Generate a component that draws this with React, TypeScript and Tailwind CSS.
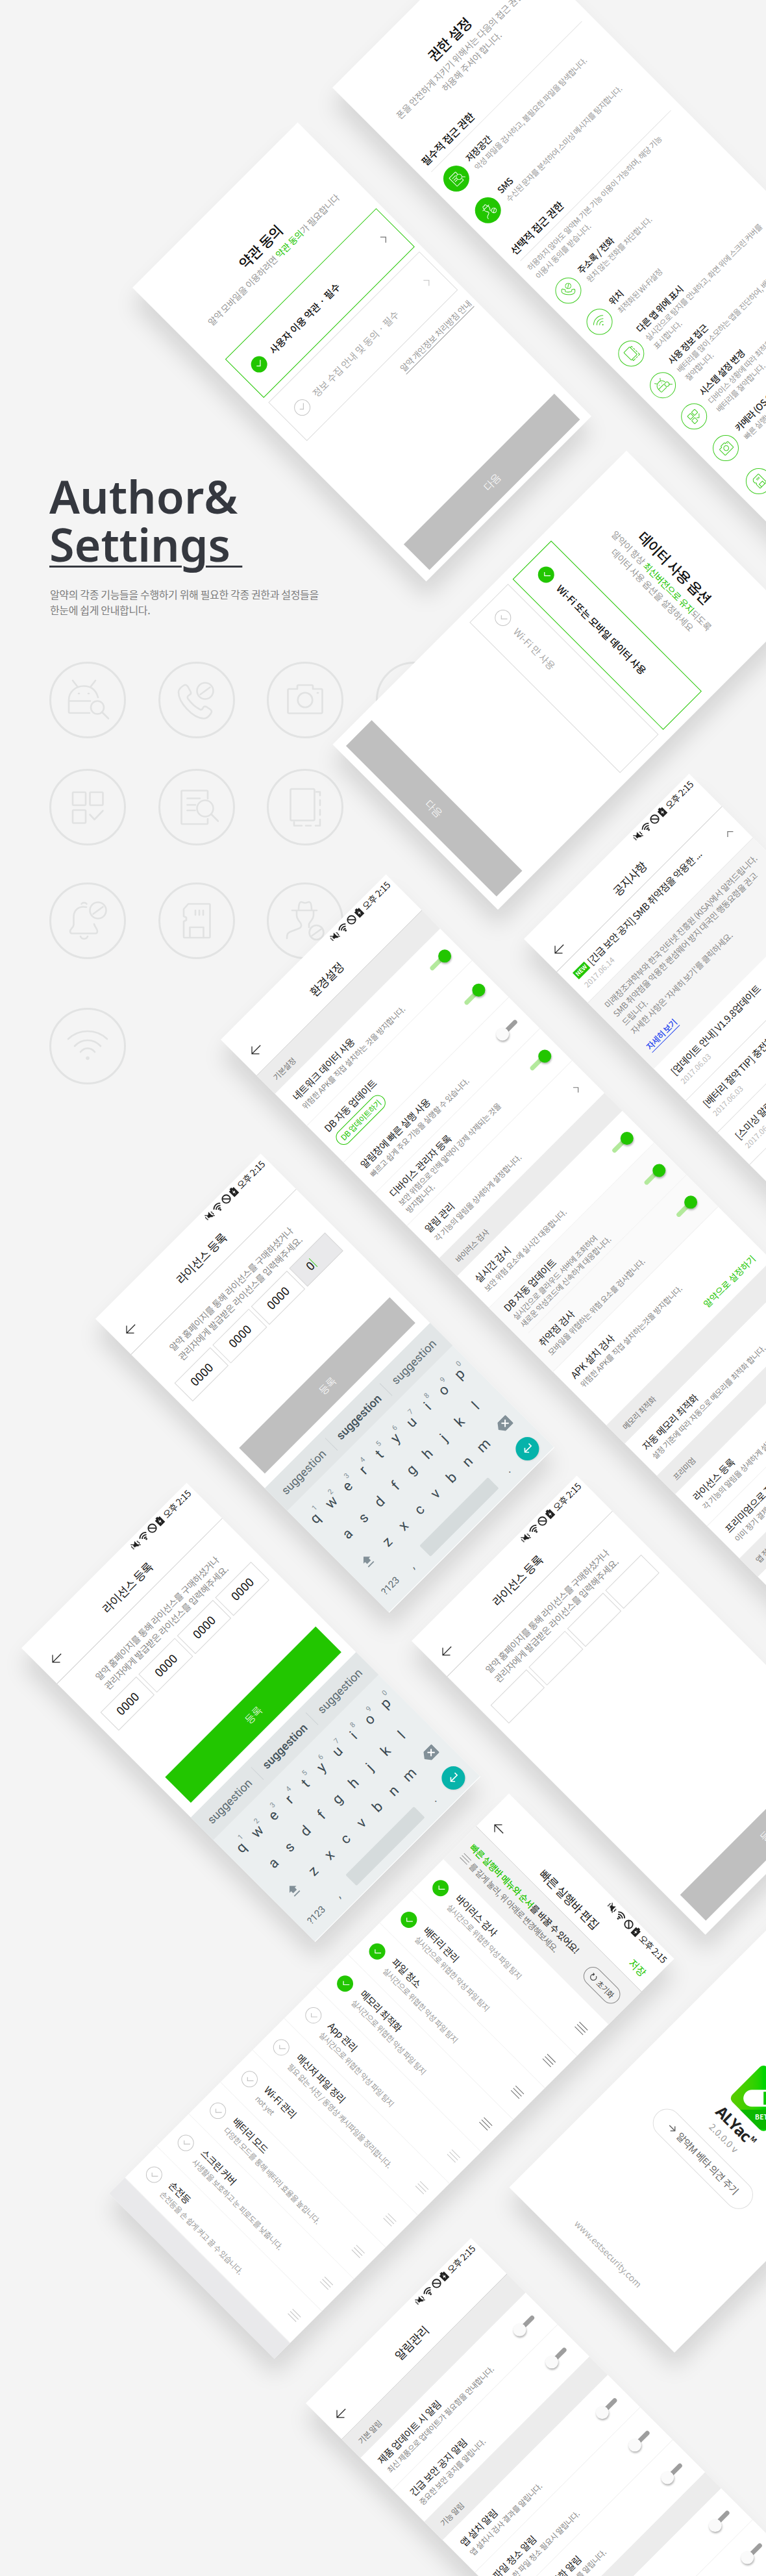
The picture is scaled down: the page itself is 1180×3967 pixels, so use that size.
import React from 'react';

type IconName = 'android' | 'phone' | 'camera' | 'grid' | 'doc' | 'copy' | 'bell' | 'sd' | 'spy' | 'wifi';

const glyphs: Record<IconName, React.ReactNode> = {
  android: (
    <>
      <path d="M3 20h-30a2 2 0 0 1-2-2V0C-29-13-18-21.500-6-21.500S13-15 16-4M-29 1.500H4" />
      <path d="M-23-30l7 9M12-30l-7 9M-14-10h1M1-10h1" />
      <circle cx="15" cy="11.500" r="10" />
      <path d="M22 18.500l10 10" />
    </>
  ),
  phone: (
    <>
      <path d="M-20-22.500c2.500-1.500 5-.5 6.500 2l4 7.500c1 2 .5 4-1.500 5l-2 1.500c-1.500 1-1.500 3-.5 4.500C-8.500 5-3 10.500 5 14.500c1.500.7 3 .5 4-1l1-2c1.200-1.800 3-2 5-1l6 4c2.200 1.500 2.500 4 1 6-2.500 4-6 8-11 8C-7 28-28 3-28-12c0-5 4-8 8-10.500z" />
      <circle cx="13" cy="-14" r="12.500" />
      <path d="M5.500-8.500l15-11" />
    </>
  ),
  camera: (
    <>
      <path d="M-12-17v-4a2 2 0 0 1 2-2h20a2 2 0 0 1 2 2v4h12.500a2 2 0 0 1 2 2V18.500a2 2 0 0 1-2 2h-49a2 2 0 0 1-2-2V-15a2 2 0 0 1 2-2z" />
      <circle cx="0" cy="0" r="11.300" />
      <path d="M19-11h1" />
    </>
  ),
  grid: (
    <>
      <rect x="-23" y="-23" width="20" height="20" rx="1.500" />
      <rect x="3.500" y="-23" width="20" height="20" rx="1.500" />
      <rect x="-23" y="4.500" width="20" height="20" rx="1.500" />
      <path d="M3.500 11.500l7 7.500L23.500 5.500" />
    </>
  ),
  doc: (
    <>
      <path d="M17-13v-11a1.500 1.500 0 0 0-1.500-1.500h-37.500A1.500 1.500 0 0 0-23.500-24v48.500a1.500 1.500 0 0 0 1.500 1.500h37.500a1.500 1.500 0 0 0 1.500-1.500V18" />
      <path d="M-14.500-13.500H5M-14.500-3.500H-2M-14.500 5h12" />
      <circle cx="13" cy="2" r="12.500" />
      <path d="M22.500 11l10.500 10.500" />
    </>
  ),
  copy: (
    <>
      <rect x="-22.500" y="-28" width="37" height="48.500" rx="2" />
      <path d="M17-23.500h6V-18M23-11v8M23 4v8M23 19v9.500h-7M9 28.500H1M-5 28.500h-12V23" />
    </>
  ),
  bell: (
    <>
      <path d="M-2-21c-12-2.500-19.500 5-19.500 15V6c0 5-5.500 6-5.500 10 0 2 1 3.500 3 3.500h36c2 0 3-1.500 3-3.500C15 12 11 10 10 5" />
      <path d="M-11 24c2 5 9 5 11 0M-9.500-26c2-2.500 6-2.500 8 0" />
      <circle cx="16" cy="-16" r="12.500" />
      <path d="M8.500-10.500l15-11" />
    </>
  ),
  sd: (
    <>
      <path d="M-13-26h32a1.500 1.500 0 0 1 1.500 1.500v49A1.500 1.500 0 0 1 19 26h-37.500a1.500 1.500 0 0 1-1.500-1.500V1l4-2v-4l-4-2v-11z" />
      <path d="M-10.500 26V10h21v16M-2-16v7M4-16v7M10-16v7" />
    </>
  ),
  spy: (
    <>
      <path d="M-20-16h38M-10-16c0-9 1-13 4-13 2 0 3 1.500 6 1.500S4-29 6-29c3 0 4 4 4 13" />
      <path d="M-13-15v6C-13-1-7 1-6 6c.500 3-1 5-4 6l-13 5c-4 1.500-5 4-5 10M13-15v6C13-2 8 0 6 5v5" />
      <circle cx="17.500" cy="18" r="11" />
      <path d="M10.500 23l14-10" />
    </>
  ),
  wifi: (
    <>
      <path d="M-30-11C-13-27 13-27 30-11M-20 0c11-12 29-12 40 0M-11 9c6-7.500 16-7.500 22 0" />
      <circle cx="0" cy="18.500" r="1.500" />
    </>
  ),
};

function Glyph({ name, className, stroke }: { name: IconName; className: string; stroke: number }) {
  return (
    <svg viewBox="-34 -34 68 68" className={className} fill="none" stroke="currentColor" strokeWidth={stroke} strokeLinecap="round" strokeLinejoin="round">
      {glyphs[name]}
    </svg>
  );
}

function Badge({ name }: { name?: IconName }) {
  return (
    <div className="flex size-[118px] items-center justify-center rounded-full border-[3px] border-[#e2e3e3] text-[#e1e2e2]">
      {name && <Glyph name={name} className="size-[68px]" stroke={2.6} />}
    </div>
  );
}

const leftShadow = 'shadow-[-18px_18px_34px_rgba(0,0,0,0.13)]';
const rightShadow = 'shadow-[18px_18px_34px_rgba(0,0,0,0.13)]';

function Screen({ at, tilt, children }: { at: string; tilt: 'left' | 'right'; children: React.ReactNode }) {
  const turn = tilt === 'left' ? '-rotate-45 ' + leftShadow : 'rotate-45 ' + rightShadow;
  return <section className={`absolute w-[360px] origin-top-left bg-white ${turn} ${at}`}>{children}</section>;
}

function StatusBar() {
  return (
    <div className="flex h-6 items-center justify-end gap-[2px] pr-[7px] text-[#222]">
      <svg viewBox="0 0 16 16" className="size-[16px]" fill="currentColor">
        <path d="M4 6h2.500L10.500 2.500v11L6.500 10H4z" />
        <path d="M2.500 2.500l11 11" fill="none" stroke="currentColor" strokeWidth="1.300" />
        <path d="M1.800 5l-1 1.500 1 1.500-1 1.500 1 1.500M13 5l1.200 1.500L13 8l1.200 1.500L13 11" fill="none" stroke="currentColor" strokeWidth="1.100" />
      </svg>
      <svg viewBox="0 0 16 16" className="size-[16px]" fill="none" stroke="currentColor" strokeWidth="1.800">
        <path d="M1 6C5 1.800 11 1.800 15 6M3.300 8.700c2.700-2.700 6.700-2.700 9.400 0M5.700 11.200c1.400-1.400 3.200-1.400 4.600 0" />
        <circle cx="8" cy="13.300" r=".6" fill="currentColor" />
      </svg>
      <svg viewBox="0 0 16 16" className="size-[16px]" fill="none" stroke="currentColor" strokeWidth="1.800">
        <circle cx="8" cy="8" r="6.200" />
        <path d="M3.600 3.600l8.800 8.800" />
      </svg>
      <svg viewBox="0 0 12 16" className="h-[16px] w-[12px]">
        <path d="M1 3h3V1h4v2h3v12H1z" fill="currentColor" />
        <path d="M7 4.500L3.500 9.500H6L5 13l3.500-5H6z" fill="#fff" />
      </svg>
      <span className="ml-[2px] text-[14px] leading-none tracking-tight">오후 2:15</span>
    </div>
  );
}

function Header({ title, size, action }: { title: string; size: string; action?: string }) {
  return (
    <header className={`border-b border-[#cfcfcf] ${size}`}>
      <StatusBar />
      <div className="grid h-[50px] grid-cols-[60px_1fr_60px] items-center">
        <svg viewBox="0 0 22 22" className="ml-[17px] size-[21px]" fill="none" stroke="#222" strokeWidth="1.300">
          <path d="M21 11H1.500M10 2.500L1.500 11l8.500 8.500" />
        </svg>
        <h2 className="pl-[2px] text-center text-[18px] tracking-[-0.02em] text-[#222]">{title}</h2>
        <span className="text-center text-[16px] text-[#22c600]">{action}</span>
      </div>
    </header>
  );
}

function Toggle({ on }: { on: boolean }) {
  return (
    <span className="relative flex h-5 w-[42px] shrink-0 items-center px-[2px]">
      <span className={`h-[7px] w-full rounded-full ${on ? 'bg-[#b3e99c]' : 'bg-[#9e9e9e]'}`} />
      <span className={`absolute top-0 size-5 rounded-full shadow-[-1px_2px_3px_rgba(0,0,0,0.3)] ${on ? 'right-0 bg-[#22c600]' : 'left-0 bg-[#fafafa]'}`} />
    </span>
  );
}

function Chevron({ className }: { className: string }) {
  return (
    <svg viewBox="0 0 10 14" className={className} fill="none" stroke="currentColor" strokeWidth="1.300">
      <path d="M2 1l6 6-6 6" />
    </svg>
  );
}

function Setting({ title, lines, size, toggle, extra, chevron }: {
  title: string; lines: string[]; size: string; toggle?: boolean; extra?: React.ReactNode; chevron?: boolean;
}) {
  return (
    <div className={`flex items-center justify-between pr-[15px] pl-4 ${size}`}>
      <div>
        <h3 className="text-[15px] leading-[22px] tracking-[-0.02em] text-[#222]">{title}</h3>
        {lines.map((l) => (
          <p key={l} className={`whitespace-nowrap text-[12px] tracking-[-0.03em] text-[#868686] ${lines.length > 1 ? 'leading-4' : 'leading-[18px]'}`}>{l}</p>
        ))}
        {extra}
      </div>
      {toggle !== undefined && <Toggle on={toggle} />}
      {chevron && <Chevron className="mr-1.5 h-[13px] w-[9px] text-[#777]" />}
    </div>
  );
}

function Band({ children, size }: { children: React.ReactNode; size: string }) {
  return <div className={`flex items-center bg-[#ececec] px-4 pt-1 text-[12px] tracking-[-0.03em] text-[#777] ${size}`}>{children}</div>;
}

function Check({ on }: { on: boolean }) {
  return (
    <span className={`flex size-[25px] shrink-0 items-center justify-center rounded-full ${on ? 'bg-[#22c600] text-white' : 'border border-[#c4c4c4] text-[#c4c4c4]'}`}>
      <svg viewBox="0 0 14 14" className="size-[14px]" fill="none" stroke="currentColor" strokeWidth="1.200">
        <path d="M2 6.500L6 10.500 12.500 4" />
      </svg>
    </span>
  );
}

function Choice({ on, children, chevron }: { on: boolean; children: React.ReactNode; chevron?: boolean }) {
  return (
    <div className={`flex h-[84px] items-center border pr-[18px] pl-[18px] text-[15px] ${on ? 'border-[#22c600] font-medium text-[#111]' : 'border-[#dcdcdc] text-[#aaa]'}`}>
      <Check on={on} />
      <span className="ml-[14px] flex-1">{children}</span>
      {chevron && <Chevron className={`h-[14px] w-[10px] ${on ? 'text-[#777]' : 'text-[#ccc]'}`} />}
    </div>
  );
}

function Permission({ icon, title, lines, filled, size = 'h-[68.700px]' }: {
  icon: IconName; title: string; lines: string[]; filled?: boolean; size?: string;
}) {
  return (
    <div className={`flex items-center pl-4 ${size}`}>
      <span className={`flex size-10 shrink-0 items-center justify-center rounded-full ${filled ? 'bg-[#22c600] text-white' : 'border-[1.500px] border-[#3ccc1e] text-[#3ccc1e]'}`}>
        <Glyph name={icon} className="size-[23px]" stroke={3} />
      </span>
      <div className="ml-3 whitespace-nowrap tracking-[-0.03em]">
        <h4 className="text-[14px] leading-5 font-medium text-[#222]">{title}</h4>
        {lines.map((l) => (
          <p key={l} className="text-[12px] leading-[18px] text-[#999]">{l}</p>
        ))}
      </div>
    </div>
  );
}

function LicenseIntro({ codes, active }: { codes: string[]; active?: number }) {
  return (
    <>
      <Header title="라이선스 등록" size="h-[78px]" />
      <div className="h-[78px] pt-[27px] text-center text-[14px] leading-5 tracking-[-0.025em] text-[#888]">
        알약 홈페이지를 통해 라이선스를 구매하셨거나
        <br />
        관리자에게 발급받은 라이선스를 입력해주세요.
      </div>
      <div className="grid grid-cols-4 gap-[5px] px-4">
        {codes.map((c, i) => (
          <div key={i} className={`flex h-10 items-center justify-center border border-[#d8d8d8] text-[18px] text-[#111] [font-family:Roboto,sans-serif] ${i === active ? 'bg-[#e9e9eb] pr-6' : ''}`}>
            {c}
            {i === active && <i className="ml-px h-[18px] w-[1.500px] bg-[#22c600]" />}
          </div>
        ))}
      </div>
    </>
  );
}

function ShiftIcon() {
  return (
    <svg viewBox="0 0 20 20" className="size-[20px]" fill="#829098">
      <path d="M10 1L2.500 8.500H6V13h8V8.500h3.500zM4 16.500h12v1.800H4z" />
    </svg>
  );
}

function Key({ k, hint }: { k: string; hint?: string }) {
  return (
    <span className="relative w-[34.900px] text-center text-[22px] text-[#3b4a52]">
      {k}
      {hint && <span className="absolute top-0 right-[4px] text-[11px] leading-[10px] text-[#829098]">{hint}</span>}
    </span>
  );
}

function Keyboard() {
  return (
    <div className="mt-4 h-[271px] border-b border-white bg-[#ebeff0] [font-family:Roboto,sans-serif]">
      <div className="flex h-[49px] items-center bg-[#e2e6e7] text-[18px] text-[#5b6a71]">
        <span className="w-[120px] text-center">suggestion</span>
        <span className="w-[120px] border-x border-[#cdd3d5] text-center font-medium text-[#43525a]">suggestion</span>
        <span className="w-[120px] text-center">suggestion</span>
      </div>
      <div className="pt-[12px]">
        <div className="flex h-[52px] items-center pl-[5px]">
          {'qwertyuiop'.split('').map((k, i) => <Key key={k} k={k} hint={String((i + 1) % 10)} />)}
        </div>
        <div className="flex h-[52px] items-center pl-[23px]">
          {'asdfghjkl'.split('').map((k) => <Key key={k} k={k} />)}
        </div>
        <div className="flex h-[52px] items-center pl-[23px]">
          <div className="w-[35px]"><ShiftIcon /></div>
          {'zxcvbnm'.split('').map((k) => <Key key={k} k={k} />)}
          <svg viewBox="0 0 24 18" className="ml-4 h-[18px] w-[24px]">
            <path d="M7 0h15.500a1.500 1.500 0 0 1 1.500 1.500v15a1.500 1.500 0 0 1-1.500 1.500H7L0 9z" fill="#829098" />
            <path d="M10.500 5l8 8M18.500 5l-8 8" stroke="#fff" strokeWidth="2" />
          </svg>
        </div>
        <div className="flex h-[52px] items-center text-[#5b6a71]">
          <span className="w-[61px] text-center text-[15px]">?123</span>
          <span className="w-[29px] text-center text-[18px]">,</span>
          <span className="ml-[16px] h-[24px] w-[149px] rounded-[2px] bg-[#d5dbdc]" />
          <span className="ml-[15px] w-[29px] text-center text-[18px]">.</span>
          <span className="ml-[12px] flex size-9 items-center justify-center rounded-full bg-[#06b3aa] shadow">
            <svg viewBox="0 0 20 20" className="size-[19px]" fill="none" stroke="#fff" strokeWidth="1.800">
              <path d="M17 5v5.500H3M7.500 5.500L2.800 10.500l4.700 5" />
            </svg>
          </span>
        </div>
      </div>
    </div>
  );
}

function BurgerIcon({ className }: { className: string }) {
  return (
    <svg viewBox="0 0 18 12" className={className} stroke="currentColor" strokeWidth="1.200">
      <path d="M0 1h18M0 6h18M0 11h18" />
    </svg>
  );
}

const scan = '실시간으로 위협한 악성 파일 탐지';
const quickItems: [string, string, boolean][] = [
  ['바이러스 검사', scan, true],
  ['배터리 관리', scan, true],
  ['파일 청소', scan, true],
  ['메모리 최적화', scan, true],
  ['App 관리', scan, false],
  ['메신저 파일 정리', '필요 없는 사진 / 동영상 캐시파일을 정리합니다.', false],
  ['Wi-Fi 관리', 'not yet', false],
  ['배터리 모드', '다양한 모드를 통해 배터리 효율을 높입니다.', false],
  ['스크린 커버', '사생활을 보호하고 눈 피로도를 낮춥니다.', false],
  ['손전등', '손전등을 손 쉽게 켜고 끌 수 있습니다.', false],
];

function Notice({ title, date }: { title: string; date: string }) {
  return (
    <div className="flex h-[69.700px] flex-col justify-center border-b border-[#e0e0e0] px-4">
      <h3 className="text-[15px] leading-[21px] tracking-[-0.03em] text-[#222]">{title}</h3>
      <p className="text-[12px] leading-[19px] text-[#bbb]">{date}</p>
    </div>
  );
}

const line = 'border-b border-[#f1f1f1]';

export default function App() {
  return (
    <main className="relative h-[3967px] w-[1180px] overflow-hidden bg-[#f4f4f4] [font-family:'Noto_Sans_CJK_KR','Noto_Sans',sans-serif]">
      <div className="pt-[727px] pl-[76px]">
        <h1 className="text-[70px] leading-[74px] font-semibold text-[#35383f] [font-family:'Noto_Sans',sans-serif]">
          Author&amp;
          <br />
          <span className="underline decoration-[3px] underline-offset-[6px]">Settings&nbsp;</span>
        </h1>
        <p className="mt-[28px] ml-px text-[16px] leading-6 tracking-[-0.022em] text-[#7c7c7c]">
          알약의 각종 기능들을 수행하기 위해 필요한 각종 권한과 설정들을
          <br />
          한눈에 쉽게 안내합니다.
        </p>
        <div className="mt-[68px] flex gap-[49.500px]">
          <Badge name="android" /><Badge name="phone" /><Badge name="camera" /><Badge />
        </div>
        <div className="mt-[47px] flex gap-[49.500px]">
          <Badge name="grid" /><Badge name="doc" /><Badge name="copy" />
        </div>
        <div className="mt-[57px] flex gap-[49.500px]">
          <Badge name="bell" /><Badge name="sd" /><Badge name="spy" />
        </div>
        <div className="mt-[75px] flex">
          <Badge name="wifi" />
        </div>
      </div>

      <Screen tilt="left" at="left-[204px] top-[443px] h-[640px]">
        <div className="pt-[79px] text-center">
          <h2 className="pl-2 text-[22px] leading-[30px] font-medium tracking-[-0.02em] text-[#111]">약관 동의</h2>
          <p className="mt-1 pl-2 text-[14px] leading-5 tracking-[-0.02em] text-[#999]">
            알약 모바일을 이용하려면 <span className="text-[#22c600]">약관 동의</span>가 필요합니다
          </p>
        </div>
        <div className="mt-[46px] mr-2 ml-[23px] flex flex-col gap-[10px]">
          <Choice on chevron>사용자 이용 약관 · 필수</Choice>
          <Choice on={false} chevron>정보 수집 안내 및 동의 · 필수</Choice>
        </div>
        <div className="mt-3 mr-2 text-right">
          <span className="inline-block border-b border-[#999] text-[13px] leading-[18px] tracking-[-0.02em] text-[#999]">알약 개인정보 처리방침 안내</span>
        </div>
        <div className="mx-4 mt-[182px] flex h-14 items-center justify-center bg-[#bfbfbf] text-[16px] font-light text-white">다음</div>
      </Screen>

      <Screen tilt="left" at="left-[512px] top-[135px] h-[1150px]">
        <div className="pt-[59px] text-center">
          <h2 className="text-[22px] leading-[30px] font-medium tracking-[-0.02em] text-[#111]">권한 설정</h2>
          <p className="mt-1 text-[14px] leading-5 tracking-[-0.02em] text-[#999]">
            폰을 안전하게 지키기 위해서는 다음의 접근 권한을
            <br />
            허용해 주셔야 합니다.
          </p>
        </div>
        <h3 className="mx-4 mt-[36px] border-b border-[#e5e5e5] pb-[6px] text-[16px] leading-6 font-medium tracking-[-0.02em] text-[#111]">필수적 접근 권한</h3>
        <Permission filled icon="doc" title="저장공간" lines={['악성 파일을 검사하고, 불필요한 파일을 탐색합니다.']} />
        <Permission filled icon="spy" title="SMS" lines={['수신된 문자를 분석하여 스미싱 메시지를 탐지합니다.']} />
        <h3 className="mx-4 mt-[26px] border-b border-[#e5e5e5] pb-[6px] text-[16px] leading-6 font-medium tracking-[-0.02em] text-[#111]">선택적 접근 권한</h3>
        <p className="mx-4 mt-2 mb-[5px] text-[12px] leading-[18px] tracking-[-0.03em] whitespace-nowrap text-[#999]">
          허용하지 않아도 알약M 기본 기능 이용이 가능하며, 해당 기능
          <br />
          이용시 동의를 받습니다.
        </p>
        <Permission icon="phone" title="주소록 / 전화" lines={['원치 않는 전화를 차단합니다.']} />
        <Permission icon="wifi" title="위치" lines={['최적화된 Wi-Fi설정']} />
        <Permission icon="copy" title="다른 앱 위에 표시" lines={['실시간으로 탐지를 안내하고, 화면 위에 스크린 커버를', '표시합니다.']} />
        <Permission icon="android" title="사용 정보 접근" lines={['배터리를 많이 소모하는 앱을 진단하여, 배터리를', '절약합니다.']} />
        <Permission icon="grid" title="시스템 설정 변경" lines={['디바이스 상황에 따라 최적화된 설정으로', '배터리를 절약합니다.']} />
        <Permission icon="camera" title="카메라 (OS 6.0 이상)" lines={['빠른 실행바의 손전등을 사용합니다.']} />
        <Permission icon="sd" title="저장소" lines={['파일을 안전하게 관리합니다.']} size="h-[75px]" />
      </Screen>

      <Screen tilt="right" at="left-[965px] top-[694px] h-[640px]">
        <div className="pt-[59px] text-center">
          <h2 className="text-[22px] leading-[30px] font-medium tracking-[-0.02em] text-[#111]">데이터 사용 옵션</h2>
          <p className="mt-1 text-[14px] leading-5 tracking-[-0.02em] text-[#999]">
            알약이 항상 <span className="text-[#22c600]">최신버전으로 유지</span>되도록
            <br />
            데이터 사용 옵션을 설정하세요
          </p>
        </div>
        <div className="mx-4 mt-[47px] flex flex-col gap-[10px]">
          <Choice on>Wi-Fi 또는 모바일 데이터 사용</Choice>
          <Choice on={false}>Wi-Fi 만 사용</Choice>
        </div>
        <div className="mx-4 mt-[213px] flex h-14 items-center justify-center bg-[#bfbfbf] text-[16px] font-light text-white">다음</div>
      </Screen>

      <Screen tilt="left" at="left-[807px] top-[1446px] h-[640px]">
        <Header title="공지사항" size="h-[72px]" />
        <div className="flex h-[68px] justify-between border-b border-[#e6e6e6] px-4 pt-[14px]">
          <div>
            <h3 className="flex items-center gap-1 text-[15px] leading-[21px] tracking-[-0.03em] text-[#222]">
              <span className="flex h-[14px] w-[25px] items-center justify-center bg-[#22c600] text-[9px] font-bold tracking-normal text-white">NEW</span>
              [긴급 보안 공지] SMB 취약점을 악용한 ...
            </h3>
            <p className="text-[12px] leading-[21px] text-[#bbb]">2017.06.14</p>
          </div>
          <Chevron className="mt-[15px] h-[14px] w-[10px] -rotate-90 text-[#777]" />
        </div>
        <div className="h-[143px] bg-[#f5f5f5] px-4 pt-[13px] text-[13px] leading-[19px] tracking-[-0.035em] whitespace-nowrap text-[#888]">
          미래창조과학부와 한국 인터넷 진흥원 (KISA)에서 알려드립니다.
          <br />
          SMB 취약점을 악용한 랜섬웨어 방지 대국민 행동요령을 권고
          <br />
          드립니다.
          <br />
          자세한 사항은 ‘자세히 보기’를 클릭하세요.
          <div className="mt-[15px]">
            <span className="inline-block border-b border-[#2547f0] font-medium text-[#2547f0]">자세히 보기</span>
          </div>
        </div>
        <Notice title="[업데이트 안내] V1.9.8업데이트" date="2017.06.03" />
        <Notice title="[배터리 절약 TIP] 충전하는 방법 안내" date="2017.06.03" />
        <Notice title="[스미싱 알림] 스미싱 주의 안내" date="2017.06.03" />
      </Screen>

      <Screen tilt="left" at="left-[340px] top-[1601px] h-[1400px]">
        <Header title="환경설정" size="h-[79px]" />
        <Band size="h-[39px]">기본설정</Band>
        <Setting size={`h-[70px] ${line}`} title="네트워크 데이터 사용" lines={['위험한 APK를 직접 설치하는 것을 방지합니다.']} toggle />
        <Setting size={`h-[79.500px] ${line}`} title="DB 자동 업데이트" lines={[]} toggle
          extra={<span className="mt-1 flex h-6 w-[98px] items-center justify-center rounded-full border border-[#22c600] text-[12px] tracking-[-0.03em] text-[#22c600]">DB 업데이트하기</span>} />
        <Setting size={`h-[68.500px] ${line}`} title="알림창에 빠른 실행 사용" lines={['빠르고 쉽게 주요 기능을 실행할 수 있습니다.']} toggle={false} />
        <Setting size={`h-[70px] ${line}`} title="디바이스 관리자 등록" lines={['보안 위험으로 인해 알약이 강제 삭제되는 것을', '방지합니다.']} toggle />
        <Setting size="h-[70px]" title="알림 관리" lines={['각 기능의 알림을 상세하게 설정합니다.']} chevron />
        <Band size="h-[39px]">바이러스 검사</Band>
        <Setting size={`h-[70px] ${line}`} title="실시간 감시" lines={['보안 위험 요소에 실시간 대응합니다.']} toggle />
        <div className="bg-[#fafafa]">
          <Setting size="h-[69px]" title="DB 자동 업데이트" lines={['실시간으로 클라우드 서버에 조회하여', '새로운 악성코드에 신속하게 대응합니다.']} toggle />
          <div className="ml-4 h-px bg-[#f1f1f1]" />
          <Setting size={`h-[69px] ${line}`} title="취약점 검사" lines={['모바일을 위협하는 위험 요소를 검사합니다.']} toggle />
        </div>
        <div className="h-[116px]">
          <Setting size="h-[70px]" title="APK 설치 검사" lines={['위험한 APK를 직접 설치하는것을 방지합니다.']} />
          <p className="mt-3 pr-4 text-right text-[14px] leading-[22px] text-[#22c600]">알약으로 설정하기</p>
        </div>
        <Band size="h-[40px]">메모리 최적화</Band>
        <Setting size="h-[70px]" title="자동 메모리 최적화" lines={['설정 기준에 따라 자동으로 메모리를 최적화 합니다.']} toggle />
        <Band size="h-[40px]">프리미엄</Band>
        <Setting size={`h-[70px] ${line}`} title="라이선스 등록" lines={['각 기능의 알림을 상세하게 설정합니다.']} />
        <Setting size="h-[70px]" title="프리미엄으로 전환" lines={['이미 정기 결제를 사용하고 있습니다.']} />
        <Band size="h-[40px]">앱 정보</Band>
      </Screen>

      <Screen tilt="left" at="left-[146.500px] top-[2031px] h-[640px]">
        <LicenseIntro codes={['0000', '0000', '0000', '0']} active={3} />
        <div className="mx-4 mt-[101px] flex h-14 items-center justify-center bg-[#bfbfbf] text-[16px] font-light text-white">등록</div>
        <Keyboard />
      </Screen>

      <Screen tilt="left" at="left-[33px] top-[2538px] h-[640px]">
        <LicenseIntro codes={['0000', '0000', '0000', '0000']} />
        <div className="mx-4 mt-[101px] flex h-14 items-center justify-center bg-[#22c600] text-[16px] font-light text-white">등록</div>
        <Keyboard />
      </Screen>

      <Screen tilt="left" at="left-[634px] top-[2526.500px] h-[640px]">
        <LicenseIntro codes={['', '', '', '']} />
        <div className="mx-4 mt-[373px] flex h-14 items-center justify-center bg-[#bfbfbf] text-[16px] font-light text-white">등록</div>
      </Screen>

      <Screen tilt="right" at="left-[784px] top-[2762px] h-[871px]">
        <Header title="빠른 실행바 편집" size="h-[72px]" action="저장" />
        <div className="flex h-[71px] items-center justify-between bg-[#f2f2f2] px-4">
          <div className="tracking-[-0.03em]">
            <p className="text-[14px] leading-[22px] font-medium text-[#333]">
              <span className="text-[#22c600]">빠른 실행바 메뉴와 순서</span>를 바꿀 수 있어요!
            </p>
            <p className="flex items-center gap-1 text-[13px] leading-[22px] tracking-[-0.05em] text-[#777]">
              <BurgerIcon className="h-[11px] w-4 text-[#999]" />를 길게 눌러, 위 아래로 변경해보세요.
            </p>
          </div>
          <span className="flex h-[29px] w-[68px] items-center justify-center gap-1 rounded-full border border-[#888] text-[12px] tracking-[-0.03em] text-[#444]">
            <svg viewBox="0 0 12 12" className="size-3" fill="none" stroke="currentColor" strokeWidth="1.200">
              <path d="M8 1.800A4.600 4.600 0 1 1 3.500 2.200M1.300 1.500l2.700.5-.4 2.700" />
            </svg>
            초기화
          </span>
        </div>
        {quickItems.map(([title, desc, on]) => (
          <div key={title} className="flex h-[69.400px] items-center border-b border-[#f3f3f3] px-4 tracking-[-0.03em]">
            <Check on={on} />
            <div className="ml-[15px] flex-1 whitespace-nowrap">
              <h3 className="text-[15px] leading-[22px] text-[#222]">{title}</h3>
              <p className="text-[12px] leading-[18px] text-[#999]">{desc}</p>
            </div>
            <BurgerIcon className={`h-[12px] w-[19px] ${on ? 'text-[#777]' : 'text-[#ccc]'}`} />
          </div>
        ))}
        <div className="h-[34px] bg-[#e9e9eb]" />
      </Screen>

      <Screen tilt="right" at="left-[1237px] top-[2916px] h-[640px]">
        <div className="flex flex-col items-center pt-[228px]">
          <div className="relative size-[76px] overflow-hidden rounded-[8px] bg-gradient-to-tr from-[#5ccb00] via-[#00d400] to-[#00dc10]">
            <div className="absolute -right-[30px] bottom-0 flex h-[30px] w-[90px] -rotate-45 items-start justify-center bg-[#0bb800] pt-[3px] text-[10px] font-bold tracking-wide text-white">BETA</div>
            <div className="absolute top-[25px] left-[7px] flex h-[26px] w-[62px] -rotate-45 items-center justify-end rounded-full bg-white pr-[3px]">
              <span className="h-5 w-[28px] rounded-r-full bg-[#0bc800]" />
            </div>
          </div>
          <p className="mt-[7px] flex h-[30px] items-start text-[24px] leading-[30px] font-bold tracking-[-0.04em] text-[#222] [font-family:'Noto_Sans',sans-serif]">
            ALYac<span className="ml-0.5 text-[10px] leading-5">M</span>
          </p>
          <p className="mt-[1px] text-[14px] leading-5 tracking-wide text-[#999]">2.0.0.0 v</p>
          <div className="mt-[14px] flex h-11 w-[200px] items-center justify-center rounded-full border border-[#dedede] text-[15px] tracking-[-0.03em] text-[#666]">
            <svg viewBox="0 0 14 14" className="mr-1.5 size-[14px]" fill="none" stroke="currentColor" strokeWidth="1.500">
              <path d="M1 7h12M8 2l5 5-5 5" />
            </svg>
            알약M 베타 의견 주기
          </div>
          <p className="mt-[174px] text-[14px] leading-5 text-[#aaa]">www.estsecurity.com</p>
        </div>
      </Screen>

      <Screen tilt="left" at="left-[471px] top-[3701px] h-[800px]">
        <Header title="알림관리" size="h-[78.500px]" />
        <Band size="h-[40px]">기본 알림</Band>
        <Setting size={`h-[70px] ${line}`} title="제품 업데이트 시 알림" lines={['최신 제품으로 업데이트가 필요함을 안내합니다.']} toggle={false} />
        <Setting size="h-[69px]" title="긴급 보안 공지 알림" lines={['중요한 보안 공지를 알립니다.']} toggle={false} />
        <Band size="h-[40.500px]">기능 알림</Band>
        <Setting size={`h-[71px] ${line}`} title="앱 설치 알림" lines={['앱 설치시 검사 결과를 알립니다.']} toggle={false} />
        <Setting size={`h-[71px] ${line}`} title="파일 청소 알림" lines={['필요한 파일 청소 필요시 알립니다.']} toggle={false} />
        <Setting size="h-[70px]" title="메모리 최적화 알림" lines={['메모리 최적화 결과를 알립니다.']} toggle={false} />
        <Band size="h-[34.500px]">기타 알림</Band>
        <Setting size={`h-[69px] ${line}`} title="이벤트 알림" lines={['새로운 이벤트를 알립니다.']} toggle={false} />
        <Setting size="h-[71px]" title="업데이트 알림" lines={['새로운 소식을 알립니다.']} toggle={false} />
      </Screen>
    </main>
  );
}
